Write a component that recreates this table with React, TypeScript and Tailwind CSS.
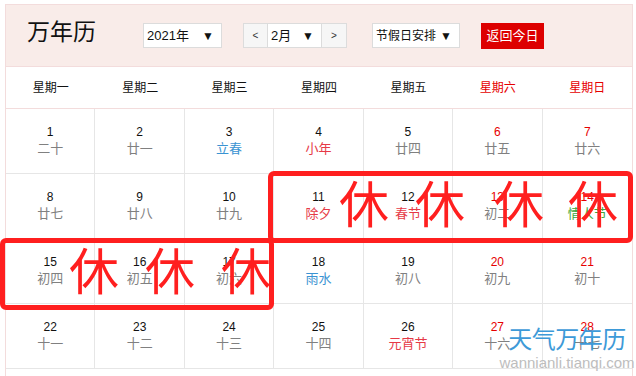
import React from "react";

type Day = { n: number; lunar: string; tone?: "blue" | "red" | "green" };

const days: Day[] = [
  { n: 1, lunar: "二十" },
  { n: 2, lunar: "廿一" },
  { n: 3, lunar: "立春", tone: "blue" },
  { n: 4, lunar: "小年", tone: "red" },
  { n: 5, lunar: "廿四" },
  { n: 6, lunar: "廿五" },
  { n: 7, lunar: "廿六" },
  { n: 8, lunar: "廿七" },
  { n: 9, lunar: "廿八" },
  { n: 10, lunar: "廿九" },
  { n: 11, lunar: "除夕", tone: "red" },
  { n: 12, lunar: "春节", tone: "red" },
  { n: 13, lunar: "初二" },
  { n: 14, lunar: "情人节", tone: "green" },
  { n: 15, lunar: "初四" },
  { n: 16, lunar: "初五" },
  { n: 17, lunar: "初六" },
  { n: 18, lunar: "雨水", tone: "blue" },
  { n: 19, lunar: "初八" },
  { n: 20, lunar: "初九" },
  { n: 21, lunar: "初十" },
  { n: 22, lunar: "十一" },
  { n: 23, lunar: "十二" },
  { n: 24, lunar: "十三" },
  { n: 25, lunar: "十四" },
  { n: 26, lunar: "元宵节", tone: "red" },
  { n: 27, lunar: "十六" },
  { n: 28, lunar: "十七" },
];

const weekdays = ["星期一", "星期二", "星期三", "星期四", "星期五", "星期六", "星期日"];

const toneClass = (tone?: Day["tone"]) => {
  if (tone === "blue") return "text-[#3a93d2]";
  if (tone === "red") return "text-[#e63946]";
  if (tone === "green") return "text-[#3aa63a]";
  return "text-[#808080]";
};

const Select: React.FC<{ label: string; className: string }> = ({ label, className }) => (
  <div
    className={`h-[25px] bg-white border border-[#dcdcdc] flex items-center justify-between pl-[3px] pr-[7px] text-[13px] text-[#111] whitespace-nowrap ${className}`}
  >
    <span>{label}</span>
    <span className="text-[12px]">▼</span>
  </div>
);

const Rest: React.FC<{ x: number; y: number }> = ({ x, y }) => (
  <div
    className="absolute w-[60px] h-[56px] text-center leading-[56px] text-[50px] text-[#ff1f1f]"
    style={{ left: x - 30, top: y - 28 }}
  >
    休
  </div>
);

export default function App() {
  const rows = [0, 1, 2, 3].map((r) => days.slice(r * 7, r * 7 + 7));

  return (
    <div className="relative w-[636px] h-[376px] overflow-hidden bg-white font-['Liberation_Sans','Noto_Sans_CJK_SC',sans-serif]">
      <div className="ml-[5px] mt-[4px] w-[628px] border border-[#f3dcdc]">
        {/* header */}
        <div className="h-[62px] bg-[#f9ece9] border-b border-[#f3dcdc] flex items-center pl-[21px]">
          <div className="text-[23px] leading-none text-[#111] -mt-[6px] w-[116px]">万年历</div>
          <Select label="2021年" className="w-[79px]" />
          <div className="ml-[21px] w-[25px] h-[25px] bg-[#f6f6f6] border border-[#dcdcdc] flex items-center justify-center text-[10px] text-[#333]">
            &lt;
          </div>
          <Select label="2月" className="w-[54px] border-l-0" />
          <div className="w-[25px] h-[25px] bg-[#f6f6f6] border border-[#dcdcdc] border-l-0 flex items-center justify-center text-[10px] text-[#333]">
            &gt;
          </div>
          <Select label="节假日安排" className="ml-[25px] w-[88px] !text-[12px]" />
          <div className="ml-[21px] w-[63px] h-[26px] bg-[#dd0000] text-white text-[13px] flex items-center justify-center">
            返回今日
          </div>
        </div>

        {/* weekday header */}
        <div className="grid grid-cols-7 h-[42px] border-b border-[#f3dcdc]">
          {weekdays.map((w, i) => (
            <div
              key={w}
              className={`flex items-center justify-center text-[12px] ${i >= 5 ? "text-[#e60000]" : "text-[#111]"}`}
            >
              {w}
            </div>
          ))}
        </div>

        {/* days */}
        {rows.map((row, ri) => (
          <div key={ri} className="grid grid-cols-7">
            {row.map((d, ci) => (
              <div
                key={d.n}
                className={`h-[65px] border-b border-[#e6e6e6] pt-[15px] flex flex-col items-center ${ci < 6 ? "border-r" : ""}`}
              >
                <div className={`text-[12px] leading-[16px] ${ci >= 5 ? "text-[#e60000]" : "text-[#111]"}`}>{d.n}</div>
                <div className={`text-[13px] leading-[18px] ${toneClass(d.tone)}`}>{d.lunar}</div>
              </div>
            ))}
          </div>
        ))}
        <div className="h-[40px]" />
      </div>

      {/* holiday annotations */}
      <div className="absolute left-[268px] top-[171px] w-[365px] h-[72px] border-[5px] border-[#ff1f1f] rounded-[6px]" />
      <div className="absolute left-0 top-[238px] w-[274px] h-[72px] border-[5px] border-[#ff1f1f] rounded-[6px]" />
      <Rest x={364} y={206} />
      <Rest x={440} y={206} />
      <Rest x={519} y={206} />
      <Rest x={593} y={206} />
      <Rest x={94} y={273} />
      <Rest x={170} y={273} />
      <Rest x={246} y={273} />

      {/* watermark */}
      <div className="absolute left-[492px] top-[326px] w-[150px] flex flex-col items-center">
        <div className="text-[24px] leading-[28px] text-[#3d9ad8] tracking-[-0.5px] whitespace-nowrap">天气万年历</div>
        <div className="text-[15px] leading-[18px] text-[#bdbdbd] whitespace-nowrap">wannianli.tianqi.com</div>
      </div>
    </div>
  );
}
